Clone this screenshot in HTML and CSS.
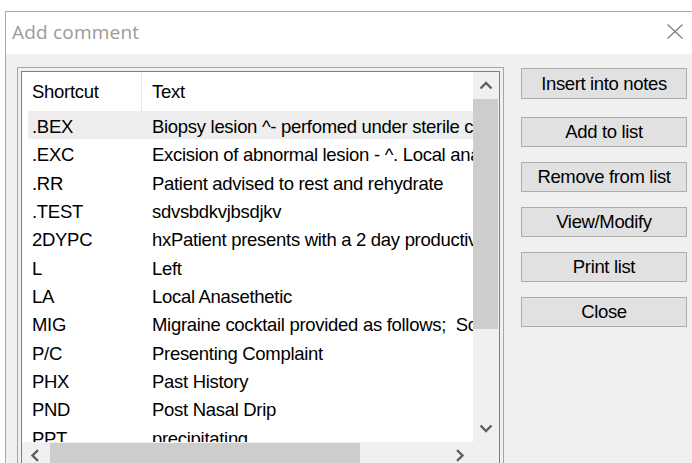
FILE: index.html
```html
<!DOCTYPE html>
<html lang="en">
<head>
<meta charset="utf-8">
<title>Add comment</title>
<link rel="stylesheet" href="styles.css">
</head>
<body>
<div class="window">
  <div class="titlebar">
    <span class="title">Add comment</span>
    <button class="close" aria-label="Close">
      <svg width="16" height="15" viewBox="0 0 16 15"><path d="M0.5 0.5 L15.5 14.5 M15.5 0.5 L0.5 14.5" stroke="#7a7a7a" stroke-width="1.1" fill="none"/></svg>
    </button>
  </div>
  <div class="content">
    <div class="listbox">
      <div class="frame">
        <div class="view">
          <div class="header">
            <div class="hcell hcell-first">Shortcut</div>
            <div class="hcell">Text</div>
          </div>
          <div class="row row-selected"><span class="key">.BEX</span><span class="text">Biopsy lesion ^- perfomed under sterile conditions with local anaesthetic</span></div>
          <div class="row"><span class="key">.EXC</span><span class="text">Excision of abnormal lesion - ^. Local anaesthetic used</span></div>
          <div class="row"><span class="key">.RR</span><span class="text">Patient advised to rest and rehydrate</span></div>
          <div class="row"><span class="key">.TEST</span><span class="text">sdvsbdkvjbsdjkv</span></div>
          <div class="row"><span class="key">2DYPC</span><span class="text">hxPatient presents with a 2 day productive cough</span></div>
          <div class="row"><span class="key">L</span><span class="text">Left</span></div>
          <div class="row"><span class="key">LA</span><span class="text">Local Anasethetic</span></div>
          <div class="row"><span class="key">MIG</span><span class="text">Migraine cocktail provided as follows;&nbsp; Scopolamine and paracetamol</span></div>
          <div class="row"><span class="key">P/C</span><span class="text">Presenting Complaint</span></div>
          <div class="row"><span class="key">PHX</span><span class="text">Past History</span></div>
          <div class="row"><span class="key">PND</span><span class="text">Post Nasal Drip</span></div>
          <div class="row"><span class="key">PPT</span><span class="text">precipitating</span></div>
          <div class="row"><span class="key">RTC</span><span class="text">Return to clinic</span></div>
        </div>
        <div class="vscroll">
          <div class="arrow arrow-v">
            <svg width="14" height="9" viewBox="0 0 14 9"><polyline points="1.5,7.5 7,2 12.5,7.5" fill="none" stroke="#606060" stroke-width="2.4"/></svg>
          </div>
          <div class="vthumb"></div>
          <div class="fill"></div>
          <div class="arrow arrow-v">
            <svg width="14" height="9" viewBox="0 0 14 9"><polyline points="1.5,1.5 7,7 12.5,1.5" fill="none" stroke="#606060" stroke-width="2.4"/></svg>
          </div>
        </div>
        <div class="hscroll">
          <div class="arrow arrow-h">
            <svg width="10" height="13" viewBox="0 0 10 13"><polyline points="8,1.2 2.5,6.5 8,11.8" fill="none" stroke="#606060" stroke-width="2.4"/></svg>
          </div>
          <div class="hthumb"></div>
          <div class="fill"></div>
          <div class="arrow arrow-h arrow-right">
            <svg width="10" height="13" viewBox="0 0 10 13"><polyline points="2,1.2 7.5,6.5 2,11.8" fill="none" stroke="#606060" stroke-width="2.4"/></svg>
          </div>
        </div>
        <div class="corner"></div>
      </div>
    </div>
    <div class="actions">
      <button class="btn btn-first">Insert into notes</button>
      <button class="btn">Add to list</button>
      <button class="btn">Remove from list</button>
      <button class="btn">View/Modify</button>
      <button class="btn">Print list</button>
      <button class="btn">Close</button>
    </div>
  </div>
</div>
</body>
</html>
```

FILE: styles.css
```css
html, body {
  margin: 0;
  padding: 0;
  background: #ffffff;
  overflow: hidden;
  width: 692px;
  height: 463px;
}

.window {
  margin: 11px 0 0 5px;
  width: 692px;
  height: 451px;
  overflow: hidden;
  border-top: 1px solid #aaaaaa;
  border-left: 1px solid #aaaaaa;
  background: #f0f0f0;
}

/* Title bar */
.titlebar {
  height: 42px;
  box-sizing: border-box;
  padding: 0 0 3px 6px;
  background: #ffffff;
  display: flex;
  align-items: center;
}

.title {
  font-family: "Open Sans", "Noto Sans", sans-serif;
  font-size: 19px;
  letter-spacing: 0.2px;
  color: #9a9a9a;
}

.close {
  margin-left: auto;
  width: 46px;
  height: 39px;
  padding: 0;
  border: 0;
  background: transparent;
  display: flex;
  align-items: center;
  justify-content: center;
}

/* Body */
.content {
  display: flex;
  gap: 17px;
  padding: 13px 0 0 11px;
  font-family: "Liberation Sans", Arial, sans-serif;
  font-size: 18.5px;
  letter-spacing: -0.3px;
  color: #000000;
}

.listbox {
  width: 487px;
  height: 420px;
  box-sizing: border-box;
  border: 1px solid #a6a6a6;
  padding: 3px;
}

.frame {
  border: 1px solid #7f7f7f;
  display: grid;
  grid-template-columns: 1fr 26px;
  grid-template-rows: 370px 26px;
  background: #ffffff;
}

.view {
  overflow: hidden;
  background: #ffffff;
}

.header {
  display: grid;
  grid-template-columns: 120px 1fr;
  height: 39px;
  line-height: 39px;
}

.hcell {
  padding-left: 10px;
  white-space: nowrap;
}

.hcell-first {
  border-right: 1px solid #e5e5e5;
}

.row {
  display: grid;
  grid-template-columns: 124px 1fr;
  margin-left: 6px;
  height: 28.33px;
  box-sizing: border-box;
  padding-top: 3px;
  line-height: 25.33px;
  white-space: nowrap;
}

.row-selected {
  background: #eeeeee;
}

.key {
  padding-left: 4px;
  overflow: hidden;
}

.text {
  overflow: hidden;
}

/* Scroll bars */
.vscroll {
  background: #f0f0f0;
  display: flex;
  flex-direction: column;
}

.hscroll {
  background: #f0f0f0;
  display: flex;
}

.arrow {
  display: flex;
  align-items: center;
  justify-content: center;
  flex: none;
}

.arrow-v {
  height: 27px;
}

.arrow-h {
  width: 26px;
}

.arrow-right {
  width: 27px;
}

.vthumb {
  height: 230px;
  margin-right: 1px;
  background: #cdcdcd;
  flex: none;
}

.hthumb {
  width: 310px;
  margin: 1px 0 0 2px;
  background: #cdcdcd;
  flex: none;
}

.fill {
  flex: 1;
}

.corner {
  background: #f0f0f0;
}

/* Command buttons */
.actions {
  display: flex;
  flex-direction: column;
  gap: 15px;
  width: 166px;
  padding-top: 1px;
}

.btn {
  height: 30px;
  padding: 0;
  border: 1px solid #adadad;
  background: #e1e1e1;
  font: inherit;
  line-height: 26px;
  letter-spacing: -0.35px;
  color: #000000;
  text-align: center;
}

.btn-first {
  height: 31px;
  margin-bottom: 3px;
}
```
